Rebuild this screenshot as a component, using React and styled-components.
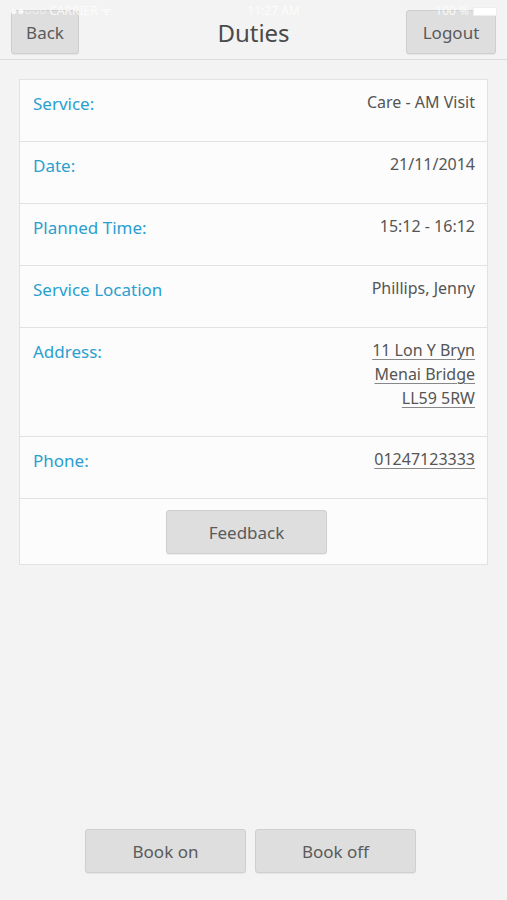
import React from "react";
import styled, { createGlobalStyle } from "styled-components";

const Global = createGlobalStyle`
  html, body { margin: 0; padding: 0; background: #f3f3f3; }
  body { font-family: "Noto Sans", "Open Sans", sans-serif; }
  * { box-sizing: border-box; }
`;

const Page = styled.div`
  position: relative;
  min-height: 900px;
  display: flex;
  flex-direction: column;
  background: #f3f3f3;
`;

const StatusBar = styled.div`
  position: absolute;
  top: 4px;
  left: 0;
  right: 0;
  height: 14px;
  padding: 0 10px;
  display: flex;
  align-items: center;
  justify-content: space-between;
  color: rgba(255, 255, 255, 0.8);
  font-size: 12px;
  line-height: 14px;
  pointer-events: none;
  z-index: 2;
`;

const Battery = styled.span`
  display: inline-block;
  width: 24px;
  height: 9px;
  margin-left: 4px;
  background: #fff;
  border: 1px solid #eee;
  vertical-align: middle;
`;

const Header = styled.header`
  height: 60px;
  padding: 10px 11px 0;
  display: grid;
  grid-template-columns: 1fr auto 1fr;
  align-items: start;
  border-bottom: 1px solid #dcdcdc;
`;

const Title = styled.h1`
  margin: 11px 0 0;
  padding: 0;
  font-size: 24px;
  line-height: 24px;
  font-weight: 400;
  color: #4a4a4a;
  text-align: center;
`;

const Button = styled.button`
  height: 44px;
  width: ${(p) => p.$w || 161}px;
  justify-self: ${(p) => p.$side || "auto"};
  font-family: inherit;
  font-size: 17px;
  color: #5a5a5a;
  background: #dedede;
  border: 1px solid #cfcfcf;
  border-radius: 3px;
  box-shadow: 0 1px 1px rgba(0, 0, 0, 0.06);
  padding: 0;
`;

const Card = styled.section`
  margin: 19px 19px 0;
  background: #fcfcfc;
  border: 1px solid #e2e2e2;
`;

const Row = styled.div`
  display: flex;
  justify-content: space-between;
  align-items: flex-start;
  padding: 10px 12px 23px 13px;
  border-bottom: 1px solid #e2e2e2;
  line-height: 24px;
  min-height: ${(p) => (p.$tall ? 0 : 62)}px;
`;

const Label = styled.div`
  color: #2a9fd0;
  font-size: 17px;
  padding-top: 2px;
`;

const Value = styled.div`
  color: #555;
  font-size: 16px;
  text-align: right;
  padding-bottom: 3px;
`;

const Link = styled.a`
  display: block;
  color: #555;
  text-decoration: underline;
  text-decoration-color: #888;
  text-underline-offset: 3px;
`;

const ActionRow = styled.div`
  display: flex;
  justify-content: center;
  padding: 11px 14px 10px 0;
`;

const Footer = styled.footer`
  margin-top: auto;
  display: flex;
  justify-content: center;
  gap: 9px;
  padding: 0 6px 27px 0;
`;

const rows = [
  { label: "Service:", value: "Care - AM Visit" },
  { label: "Date:", value: "21/11/2014" },
  { label: "Planned Time:", value: "15:12 - 16:12" },
  { label: "Service Location", value: "Phillips, Jenny" },
  { label: "Address:", links: ["11 Lon Y Bryn", "Menai Bridge", "LL59 5RW"] },
  { label: "Phone:", links: ["01247123333"] },
];

export default function App() {
  return (
    <Page>
      <Global />
      <StatusBar>
        <span>●●○○○ CARRIER ᯤ</span>
        <span>11:27 AM</span>
        <span>
          100 %<Battery />
        </span>
      </StatusBar>
      <Header>
        <Button $w={68} $side="start">Back</Button>
        <Title>Duties</Title>
        <Button $w={90} $side="end">Logout</Button>
      </Header>
      <Card>
        {rows.map((r) => (
          <Row key={r.label} $tall={!!r.links && r.links.length > 1}>
            <Label>{r.label}</Label>
            <Value>
              {r.value}
              {r.links && r.links.map((l) => <Link key={l}>{l}</Link>)}
            </Value>
          </Row>
        ))}
        <ActionRow>
          <Button>Feedback</Button>
        </ActionRow>
      </Card>
      <Footer>
        <Button>Book on</Button>
        <Button>Book off</Button>
      </Footer>
    </Page>
  );
}
